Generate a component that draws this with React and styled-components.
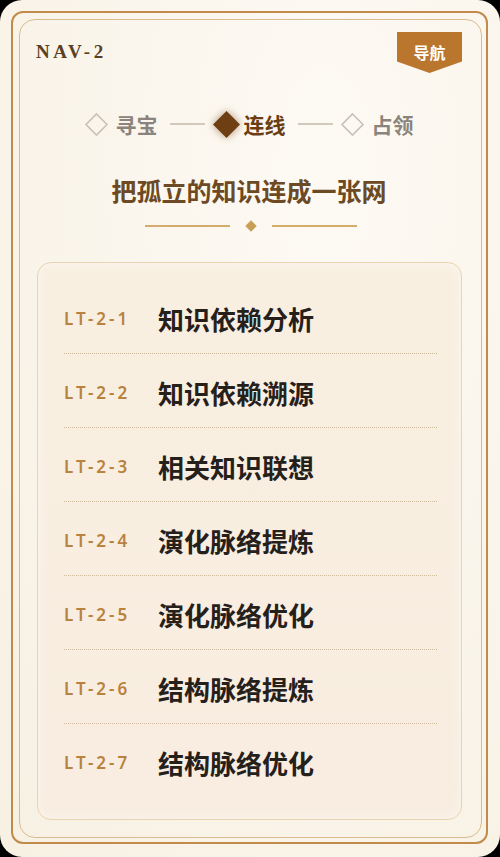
import React from "react";
import styled, { createGlobalStyle } from "styled-components";

const GlobalStyle = createGlobalStyle`
  * { box-sizing: border-box; }
  html, body { margin: 0; padding: 0; background: #000; }
  body {
    font-family: "Noto Sans", "Noto Sans CJK SC", sans-serif;
    -webkit-font-smoothing: antialiased;
  }
`;

const lessons = [
  { code: "LT-2-1", title: "知识依赖分析" },
  { code: "LT-2-2", title: "知识依赖溯源" },
  { code: "LT-2-3", title: "相关知识联想" },
  { code: "LT-2-4", title: "演化脉络提炼" },
  { code: "LT-2-5", title: "演化脉络优化" },
  { code: "LT-2-6", title: "结构脉络提炼" },
  { code: "LT-2-7", title: "结构脉络优化" },
];

const steps = [
  { label: "寻宝", active: false },
  { label: "连线", active: true },
  { label: "占领", active: false },
];

const Page = styled.div`
  width: 500px;
  height: 857px;
  border-radius: 22px;
  background: radial-gradient(
    ellipse at 65% 20%,
    #fdfaf4 0%,
    #faf5eb 55%,
    #f7f0e3 100%
  );
  padding: 11px 12px 13px 11px;
  overflow: hidden;
`;

const OuterFrame = styled.div`
  height: 100%;
  border: 2px solid #c18b4b;
  border-radius: 12px;
  padding: 6px 4px 4px 6px;
`;

const InnerFrame = styled.div`
  height: 100%;
  border: 1px solid #d9bb8f;
  border-radius: 16px;
  padding: 12px 19px 0 16px;
  display: flex;
  flex-direction: column;
`;

const Header = styled.div`
  display: flex;
  justify-content: space-between;
  align-items: flex-start;
`;

const NavCode = styled.div`
  margin-top: 8px;
  font-family: "Liberation Serif", "DejaVu Serif", serif;
  font-weight: 700;
  font-size: 19px;
  letter-spacing: 3.5px;
  color: #5a3f24;
  line-height: 24px;
`;

const Badge = styled.div`
  width: 65px;
  height: 41px;
  background: #b9762c;
  clip-path: polygon(0 0, 100% 0, 100% 72%, 50% 100%, 0 72%);
  color: #fff;
  font-family: "Noto Sans CJK SC", sans-serif;
  font-weight: 700;
  font-size: 16px;
  line-height: 16px;
  display: flex;
  justify-content: center;
  padding-top: 12px;
`;

const Steps = styled.div`
  margin-top: 37px;
  height: 28px;
  display: flex;
  justify-content: center;
  align-items: center;
`;

const Step = styled.div`
  display: flex;
  align-items: center;
  gap: ${(p) => (p.$active ? "4px" : "8px")};
`;

const StepLabel = styled.span`
  font-family: "Noto Sans CJK SC", sans-serif;
  font-weight: 700;
  font-size: 21px;
  line-height: 28px;
  color: ${(p) => (p.$active ? "#6b3d12" : "#8a847c")};
`;

const Connector = styled.span`
  width: 35px;
  height: 1.5px;
  background: #d2c9bc;
  margin: 0 8px 0 12px;
`;

const DiamondSvg = styled.svg`
  display: block;
  flex: none;
  overflow: visible;
  filter: ${(p) =>
    p.$active ? "drop-shadow(0 0 4px rgba(120, 70, 20, 0.55))" : "none"};
`;

const Diamond = ({ active }) =>
  active ? (
    <DiamondSvg $active width="27" height="27" viewBox="0 0 27 27">
      <polygon points="13.5,0 27,13.5 13.5,27 0,13.5" fill="#6e3f13" />
    </DiamondSvg>
  ) : (
    <DiamondSvg width="23" height="23" viewBox="0 0 23 23">
      <polygon
        points="11.5,1 22,11.5 11.5,22 1,11.5"
        fill="none"
        stroke="#c9c1b6"
        strokeWidth="1.6"
      />
    </DiamondSvg>
  );

const Title = styled.h1`
  margin: 35px 0 0;
  text-align: center;
  font-family: "Noto Sans CJK SC", sans-serif;
  font-weight: 700;
  font-size: 25px;
  line-height: 34px;
  color: #6d4a23;
`;

const Ornament = styled.div`
  margin-top: 15px;
  display: flex;
  justify-content: center;
  align-items: center;
  gap: 17px;
  padding-left: 3px;
`;

const OrnamentLine = styled.span`
  width: 85px;
  height: 1.5px;
  background: #d3ad6c;
`;

const OrnamentDot = styled.span`
  width: 8px;
  height: 8px;
  background: #c99f56;
  transform: rotate(45deg);
`;

const Card = styled.div`
  margin: 32px 0 0 1px;
  border: 1.5px solid #ead3b0;
  border-radius: 14px;
  background: linear-gradient(180deg, #f9efe1 0%, #f8ede0 100%);
  box-shadow: inset 0 0 12px rgba(255, 255, 255, 0.5);
  padding: 17px 24px 22px 26px;
`;

const Row = styled.div`
  display: flex;
  align-items: center;
  padding: 24px 0 19px;
  border-bottom: ${(p) => (p.$last ? "none" : "1.5px dotted #cfbb9c")};
`;

const Code = styled.span`
  width: 94px;
  flex: none;
  font-family: "Noto Sans", sans-serif;
  font-weight: 600;
  font-size: 17px;
  letter-spacing: 3px;
  color: #b8823f;
  line-height: 30px;
`;

const LessonTitle = styled.span`
  font-family: "Noto Sans CJK SC", sans-serif;
  font-weight: 700;
  font-size: 26px;
  line-height: 30px;
  color: #26201b;
`;

export default function App() {
  return (
    <>
      <GlobalStyle />
      <Page>
        <OuterFrame>
          <InnerFrame>
            <Header>
              <NavCode>NAV-2</NavCode>
              <Badge>导航</Badge>
            </Header>
            <Steps>
              {steps.map((s, i) => (
                <React.Fragment key={s.label}>
                  {i > 0 && <Connector />}
                  <Step $active={s.active}>
                    <Diamond active={s.active} />
                    <StepLabel $active={s.active}>{s.label}</StepLabel>
                  </Step>
                </React.Fragment>
              ))}
            </Steps>
            <Title>把孤立的知识连成一张网</Title>
            <Ornament>
              <OrnamentLine />
              <OrnamentDot />
              <OrnamentLine />
            </Ornament>
            <Card>
              {lessons.map((l, i) => (
                <Row key={l.code} $last={i === lessons.length - 1}>
                  <Code>{l.code}</Code>
                  <LessonTitle>{l.title}</LessonTitle>
                </Row>
              ))}
            </Card>
          </InnerFrame>
        </OuterFrame>
      </Page>
    </>
  );
}
